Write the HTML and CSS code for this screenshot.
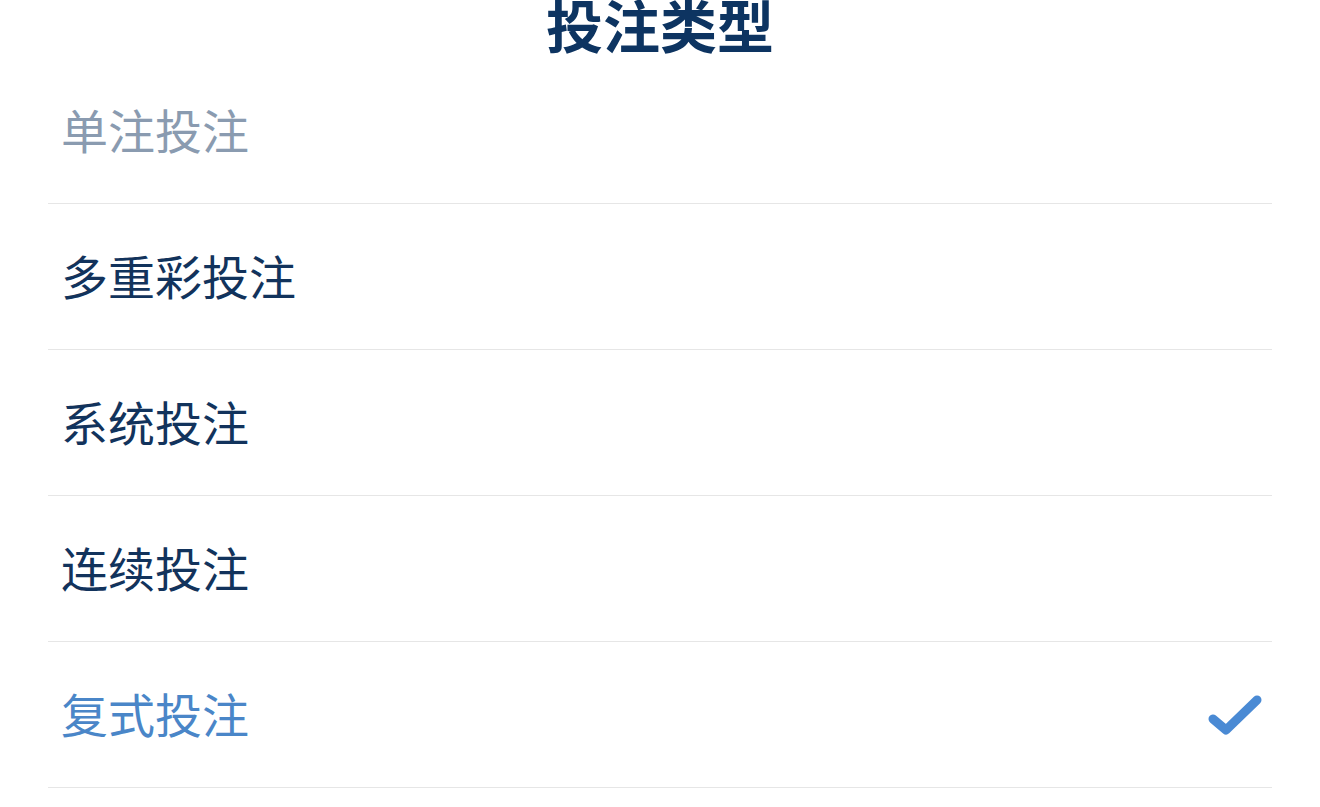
FILE: index.html
```html
<!DOCTYPE html>
<html lang="zh">
<head>
<meta charset="utf-8">
<link rel="stylesheet" href="styles.css">
</head>
<body>
<div class="sheet">
  <header class="title">投注类型</header>
  <ul class="list">
    <li class="item disabled"><span>单注投注</span></li>
    <li class="item"><span>多重彩投注</span></li>
    <li class="item"><span>系统投注</span></li>
    <li class="item"><span>连续投注</span></li>
    <li class="item selected"><span>复式投注</span>
      <svg class="check" width="60" height="50" viewBox="0 0 60 50"><path d="M8 27 L21 38 L52 8" fill="none" stroke="#4a8ad4" stroke-width="9" stroke-linecap="round" stroke-linejoin="round"/></svg>
    </li>
  </ul>
</div>
</body>
</html>
```
FILE: styles.css
```css
html, body {
  margin: 0;
  padding: 0;
  background: #ffffff;
}
body {
  font-family: "Noto Sans CJK SC", "Noto Sans", sans-serif;
  width: 1320px;
  height: 807px;
  overflow: hidden;
}
.sheet {
  padding: 0 48px;
}
.title {
  height: 58px;
  font-size: 57px;
  line-height: 46px;
  font-weight: 700;
  color: #0d3461;
  text-align: center;
}
.list {
  list-style: none;
  margin: 0;
  padding: 0;
}
.item {
  height: 145px;
  border-bottom: 1px solid #e6e6e6;
  display: flex;
  align-items: center;
  justify-content: space-between;
  padding: 0 7px 0 13px;
  font-size: 47px;
  color: #12335c;
}
.item span {
  line-height: 1;
  margin-top: -4px;
}
.item.disabled {
  color: #8a9bb0;
}
.item.selected {
  color: #4a86c8;
}
.check {
  display: block;
  margin-top: 4px;
}
```
